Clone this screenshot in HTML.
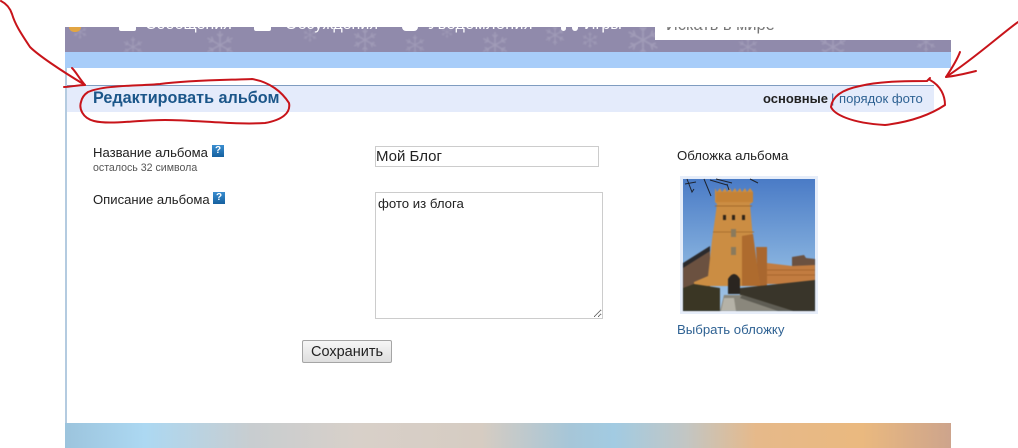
<!DOCTYPE html>
<html lang="ru">
<head>
<meta charset="utf-8">
<title>Редактировать альбом</title>
<style>
html,body{margin:0;padding:0;background:#fff}
body{width:1018px;height:448px;position:relative;overflow:hidden;font-family:"Liberation Sans",Arial,sans-serif;color:#222}
.a{position:absolute;white-space:nowrap}
#hdr{left:65px;top:27px;width:886px;height:25px;background:#908aab;overflow:hidden}
#hdr .n{position:absolute;top:-11px;font-size:16px;line-height:18px;color:#fff;white-space:nowrap}
#hdr svg{position:absolute;left:0;top:0;filter:blur(.7px)}
#srch{position:absolute;left:590px;top:0;width:296px;height:13px;background:#fff;overflow:hidden}
#srch span{position:absolute;left:11px;top:-11px;font-size:16.4px;line-height:18px;color:#777;white-space:nowrap}
#strip{left:65px;top:52px;width:886px;height:16px;background:#a8cdf9}
#lb{left:65px;top:68px;width:2px;height:355px;background:#b4cbe0}
#bar{left:67px;top:85px;width:867px;height:26px;background:#e4ebfb;border-top:1px solid #7f9cc0}
#foot{left:65px;top:423px;width:886px;height:25px;background:linear-gradient(90deg,#9cc4dd 0,#acd8f2 9%,#c8cdd0 21%,#d8d0c9 33%,#d6ccc2 47%,#a6c6d8 57%,#a2cbe2 62%,#c2c6c4 70%,#e6b98a 78%,#eab97f 90%,#cda48c 100%)}
input,textarea,button{font-family:"Liberation Sans",Arial,sans-serif;box-sizing:border-box;margin:0}
</style>
</head>
<body>
<div class="a" id="hdr">
<svg width="886" height="25" fill="none" stroke="#a19cb8" stroke-width="1.1">
<defs><path id="fl" d="M0-10V10M-9-5L9 5M-9 5L9-5M-2-8L0-6L2-8M-2 8L0 6L2 8M-8-2L-5-3L-6-6M8 2L5 3L6 6M8-2L5-3L6-6M-8 2L-5 3L-6 6"/></defs>
<use href="#fl" transform="translate(15,5) scale(.7)"/>
<use href="#fl" transform="translate(68,20) scale(1)"/>
<use href="#fl" transform="translate(155,18) scale(1.4)"/>
<use href="#fl" transform="translate(245,8) scale(.7)"/>
<use href="#fl" transform="translate(300,13) scale(1.2)"/>
<use href="#fl" transform="translate(350,18) scale(1)"/>
<use href="#fl" transform="translate(382,5) scale(.6)"/>
<use href="#fl" transform="translate(430,18) scale(1.3)"/>
<use href="#fl" transform="translate(490,8) scale(1)"/>
<use href="#fl" transform="translate(525,13) scale(.8)"/>
<use href="#fl" transform="translate(578,13) scale(1.6)"/>
<use href="#fl" transform="translate(683,20) scale(1)"/>
<use href="#fl" transform="translate(768,20) scale(1.4)"/>
<use href="#fl" transform="translate(861,15) scale(1)"/>
</svg>
<div style="position:absolute;left:4px;top:0;width:12px;height:5px;background:#e2a542;border-radius:0 0 7px 7px"></div>
<div style="position:absolute;left:54px;top:0;width:17px;height:4px;background:#fff;border-radius:0 0 2px 2px"></div>
<div style="position:absolute;left:189px;top:0;width:17px;height:4px;background:#fff;border-radius:0 0 2px 2px"></div>
<div style="position:absolute;left:337px;top:0;width:16px;height:4px;background:#fff;border-radius:0 0 8px 8px"></div>
<div style="position:absolute;left:496px;top:0;width:5px;height:4px;background:#fff;border-radius:0 0 3px 3px"></div>
<div style="position:absolute;left:507px;top:0;width:6px;height:4px;background:#fff;border-radius:0 0 3px 3px"></div>
<span class="n" style="left:80px">Сообщения</span>
<span class="n" style="left:220px">Обсуждения</span>
<span class="n" style="left:363px;letter-spacing:.45px">Уведомления</span>
<span class="n" style="left:519px">Игры</span>
<div id="srch"><span>Искать в мире</span></div>
</div>
<div class="a" id="strip"></div>
<div class="a" id="lb"></div>
<div class="a" id="bar"></div>
<div class="a" id="foot"></div>

<div class="a" style="left:93px;top:89px;font-size:16.2px;line-height:18px;font-weight:bold;color:#1b5689">Редактировать альбом</div>
<div class="a" style="left:763px;top:90px;font-size:13px;line-height:17px;font-weight:bold;color:#222">основные</div>
<div class="a" style="left:831px;top:90px;font-size:13px;line-height:17px;color:#3a6ea5">|</div>
<div class="a" style="left:839px;top:90px;font-size:13.1px;line-height:17px;color:#2f6293">порядок фото</div>

<div class="a" style="left:93px;top:145px;font-size:13.1px;line-height:16px;color:#222">Название альбома</div>
<div class="a" style="left:212px;top:145px;width:12px;height:12px;background:linear-gradient(#3a8ed0,#15609f);color:#fff;font-size:10px;line-height:12px;font-weight:bold;text-align:center">?</div>
<div class="a" style="left:93px;top:161px;font-size:10.6px;line-height:14px;color:#555">осталось 32 символа</div>
<div class="a" style="left:93px;top:192px;font-size:13.1px;line-height:16px;color:#222">Описание альбома</div>
<div class="a" style="left:213px;top:192px;width:12px;height:12px;background:linear-gradient(#3a8ed0,#15609f);color:#fff;font-size:10px;line-height:12px;font-weight:bold;text-align:center">?</div>

<input class="a" type="text" value="Мой Блог" style="left:375px;top:146px;width:224px;height:21px;border:1px solid #ccc;padding:0;font-size:15px;color:#222;background:#fff">
<textarea class="a" style="left:375px;top:192px;width:228px;height:127px;border:1px solid #ccc;padding:3px 2px;font-size:13.2px;line-height:15px;color:#222;background:#fff">фото из блога</textarea>
<button class="a" style="left:302px;top:340px;width:90px;height:23px;border:1px solid #a5a5a5;border-radius:2px;background:linear-gradient(#f6f6f6,#dedede);font-size:14.5px;color:#222;padding:0">Сохранить</button>

<div class="a" style="left:677px;top:148px;font-size:13.2px;line-height:16px;color:#222">Обложка альбома</div>
<svg class="a" style="left:680px;top:176px" width="138" height="138" viewBox="0 0 138 138">
<defs><linearGradient id="sky" x1="0" y1="0" x2="0" y2="1"><stop offset="0" stop-color="#4a7bc6"/><stop offset=".65" stop-color="#86b1de"/><stop offset="1" stop-color="#a5c6e6"/></linearGradient></defs>
<rect width="138" height="138" fill="#e6edf9"/>
<rect x="3" y="3" width="132" height="132" fill="url(#sky)"/>
<g style="filter:blur(.5px)">
<path d="M3 90L30 72V112H3Z" fill="#6b5140"/>
<path d="M3 87L30 70V75L3 92Z" fill="#2b2a2c"/>
<path d="M112 92V81L124 79L126 82L135 83V92Z" fill="#6b5140"/>
<path d="M87 87L112 90L135 89V108H87Z" fill="#c27c40"/>
<path d="M87 94H135M87 99H135" stroke="#a9672f" stroke-width="1"/>
<path d="M76 71H87V112H78Z" fill="#a9672f"/>
<path d="M35 12L37 16L40 12L42 16L45 12L47 16L50 12L52 16L55 12L57 16L60 12L62 16L65 12L67 16L70 12L73 16V26L70 28L73 64L80 110H14L14 106L28 100L32 64L37 28L35 26Z" fill="#cb8d43"/>
<path d="M36 16H73V26H36Z" fill="#c48236"/>
<path d="M35 30H72" stroke="#a36a2b"/>
<path d="M33 56H74" stroke="#a9702e"/>
<path d="M62 60L73 58L80 110H62Z" fill="#ae6b2e"/>
<rect x="43" y="39" width="3" height="5" fill="#2f2418"/><rect x="52" y="39" width="3" height="5" fill="#2f2418"/><rect x="62" y="39" width="3" height="5" fill="#2f2418"/>
<rect x="51" y="53" width="5" height="8" fill="#8a7a5c"/><rect x="51" y="71" width="5" height="8" fill="#8a7a5c"/>
<path d="M48 118V103Q54 93 60 103V118Z" fill="#2a2520"/>
<path d="M3 112L14 108L40 112V135H3Z" fill="#3a3624"/>
<path d="M60 112L135 104V135H60Z" fill="#39352a"/>
<path d="M40 135L44 119H62L113 135Z" fill="#8a877c"/>
<path d="M41 135L44 122L54 122L56 135Z" fill="#b5b2a7"/>
<path d="M62 119L113 135H98L60 122Z" fill="#5f5d54"/>
</g>
<g stroke="#1d2430" fill="none" stroke-width="1">
<path d="M7 3L12 16L14 13M5 8L16 6M24 3L31 20M30 4L47 9M36 3L52 7M47 8L49 14M70 3L78 7"/>
</g>
</svg>
<div class="a" style="left:677px;top:322px;font-size:13.2px;line-height:16px;color:#2f6293">Выбрать обложку</div>

<svg class="a" style="left:0;top:0" width="1018" height="448" fill="none" stroke="#c8141a" stroke-width="2" stroke-linecap="round" stroke-linejoin="round">
<path d="M1 1C7 4 10 8 12 14C15 24 20 32 30 47C38 55 60 70 85 85"/>
<path d="M72 68C76 72 79 78 85 85C78 85 70 87 64 87"/>
<path d="M88 92C104 85 138 86 160 84C190 80 230 80 252 79C270 82 282 92 289 103C291 113 282 120 265 123C235 125 195 120 165 120C135 120 110 125 94 121C82 118 79 108 81 102C82 97 85 94 88 92Z"/>
<path d="M1018 22C1000 35 975 58 946 77"/>
<path d="M960 52C957 60 952 68 946 77C955 76 968 73 976 71"/>
<path d="M930 78L927 81C910 81 880 81 860 86C840 90 832 98 831 107C834 114 850 123 885 125C910 122 930 115 945 105C945 96 941 86 930 80"/>
</svg>
</body>
</html>
